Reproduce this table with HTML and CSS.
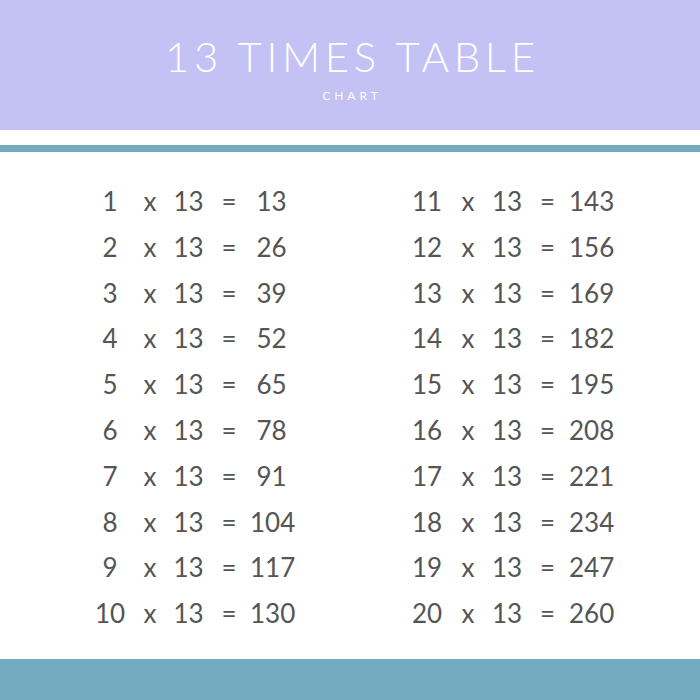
FILE: index.html
```html
<!DOCTYPE html>
<html>
<head>
<meta charset="utf-8">
<link rel="stylesheet" href="styles.css">
</head>
<body>
<div class="page">
  <header class="header">
    <h1 class="title">13 TIMES TABLE</h1>
    <div class="subtitle">CHART</div>
  </header>
  <div class="stripe"></div>
  <main class="tables">
    <div class="table left">
      <span>1</span><span>x</span><span>13</span><span>=</span><span>13</span>
      <span>2</span><span>x</span><span>13</span><span>=</span><span>26</span>
      <span>3</span><span>x</span><span>13</span><span>=</span><span>39</span>
      <span>4</span><span>x</span><span>13</span><span>=</span><span>52</span>
      <span>5</span><span>x</span><span>13</span><span>=</span><span>65</span>
      <span>6</span><span>x</span><span>13</span><span>=</span><span>78</span>
      <span>7</span><span>x</span><span>13</span><span>=</span><span>91</span>
      <span>8</span><span>x</span><span>13</span><span>=</span><span>104</span>
      <span>9</span><span>x</span><span>13</span><span>=</span><span>117</span>
      <span>10</span><span>x</span><span>13</span><span>=</span><span>130</span>
    </div>
    <div class="table right">
      <span>11</span><span>x</span><span>13</span><span>=</span><span>143</span>
      <span>12</span><span>x</span><span>13</span><span>=</span><span>156</span>
      <span>13</span><span>x</span><span>13</span><span>=</span><span>169</span>
      <span>14</span><span>x</span><span>13</span><span>=</span><span>182</span>
      <span>15</span><span>x</span><span>13</span><span>=</span><span>195</span>
      <span>16</span><span>x</span><span>13</span><span>=</span><span>208</span>
      <span>17</span><span>x</span><span>13</span><span>=</span><span>221</span>
      <span>18</span><span>x</span><span>13</span><span>=</span><span>234</span>
      <span>19</span><span>x</span><span>13</span><span>=</span><span>247</span>
      <span>20</span><span>x</span><span>13</span><span>=</span><span>260</span>
    </div>
  </main>
  <footer class="footer"></footer>
</div>
</body>
</html>
```

FILE: styles.css
```css
html, body {
  margin: 0;
  padding: 0;
  background: #ffffff;
}

.page {
  width: 700px;
  height: 700px;
  display: flex;
  flex-direction: column;
  font-family: "Lato", "Liberation Sans", sans-serif;
}

.header {
  height: 130px;
  background: #c4c1f5;
  display: flex;
  flex-direction: column;
  align-items: center;
  box-sizing: border-box;
  padding-top: 30px;
}

.title {
  margin: 0;
  font-family: "Lato", sans-serif;
  font-weight: 300;
  font-size: 42px;
  line-height: 52px;
  letter-spacing: 4.6px;
  color: #ffffff;
  margin-right: -4.6px;
}

.subtitle {
  margin-top: 7px;
  font-family: "Lato", sans-serif;
  font-size: 12px;
  line-height: 14px;
  letter-spacing: 4px;
  color: #ffffff;
  margin-right: -4px;
}

.stripe {
  height: 7px;
  margin-top: 15px;
  background: #74aabd;
}

.tables {
  flex: 1;
  display: flex;
  padding-top: 27px;
  padding-left: 89px;
  gap: 113px;
}

.table {
  display: grid;
  grid-auto-rows: 45.8px;
  align-content: start;
  font-size: 26px;
  color: #555555;
  text-align: center;
  line-height: 45.8px;
}

.table.left {
  grid-template-columns: 42px 38px 39px 42px 43px;
}

.table.right {
  grid-template-columns: 42px 40px 38px 43px 45px;
}

.footer {
  height: 41px;
  background: #72aabf;
}
```
